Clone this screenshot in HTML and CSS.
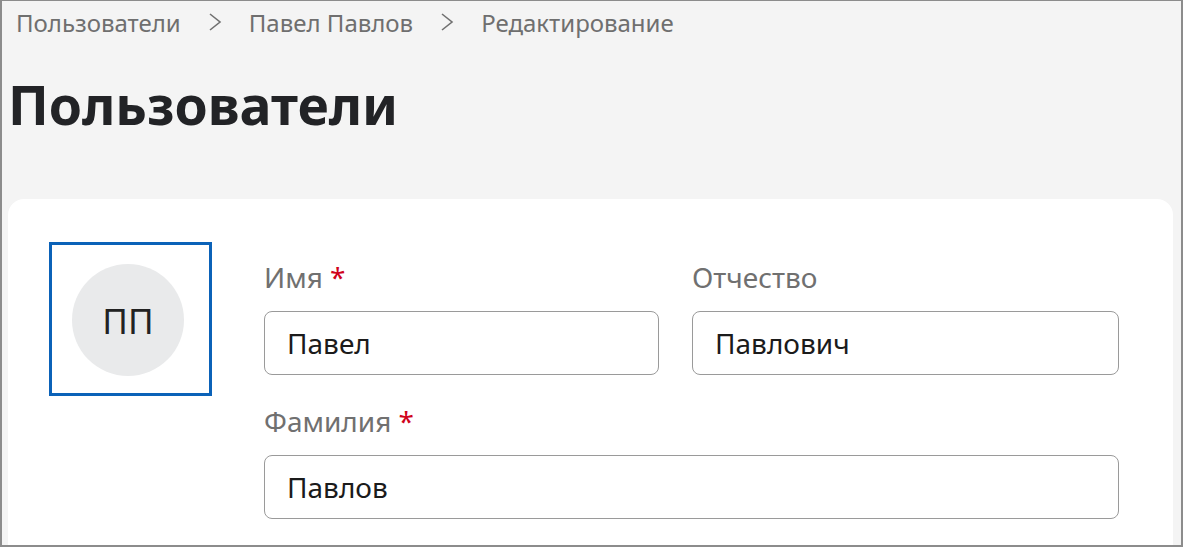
FILE: index.html
```html
<!DOCTYPE html>
<html lang="ru">
<head>
<meta charset="UTF-8">
<meta name="viewport" content="width=device-width, initial-scale=1.0">
<title>Пользователи — Редактирование</title>
<link rel="stylesheet" href="styles.css">
</head>
<body>
    <div class="frame">
        <nav class="crumbs">
            <a href="#">Пользователи</a>
            <svg class="chevron" width="14" height="18" viewBox="0 0 14 18"><polyline points="2,1 12,9 2,17" /></svg>
            <a href="#">Павел Павлов</a>
            <svg class="chevron" width="14" height="18" viewBox="0 0 14 18"><polyline points="2,1 12,9 2,17" /></svg>
            <span>Редактирование</span>
        </nav>

        <h1 class="page-title">Пользователи</h1>

        <section class="card">
            <div class="avatar-box">
                <div class="avatar">ПП</div>
            </div>

            <form class="fields">
                <div class="field">
                    <label for="firstName">Имя <span class="req">*</span></label>
                    <input type="text" id="firstName" value="Павел">
                </div>
                <div class="field">
                    <label for="middleName">Отчество</label>
                    <input type="text" id="middleName" value="Павлович">
                </div>
                <div class="field wide">
                    <label for="lastName">Фамилия <span class="req">*</span></label>
                    <input type="text" id="lastName" value="Павлов">
                </div>
            </form>
        </section>
    </div>
</body>
</html>
```

FILE: styles.css
```css
html, body {
    margin: 0;
    padding: 0;
}

body {
    font-family: 'Noto Sans', 'Open Sans', sans-serif;
    color: #222;
}

.frame {
    height: 100vh;
    box-sizing: border-box;
    border: 2px solid #8c8c8c;
    border-top-width: 1px;
    background-color: #f4f4f4;
    padding: 0 8px 0 6px;
    overflow: hidden;
}

.crumbs {
    display: flex;
    align-items: center;
    gap: 27px;
    height: 42px;
    padding-left: 8px;
    font-size: 24px;
    color: #6f6f6f;
}

.crumbs a {
    color: inherit;
    text-decoration: none;
}

.chevron {
    fill: none;
    stroke: #707070;
    stroke-width: 1.6;
}

.page-title {
    margin: 30px 0 0;
    font-size: 53.5px;
    line-height: 64px;
    font-weight: 700;
    color: #222326;
}

.card {
    display: flex;
    align-items: flex-start;
    margin-top: 62px;
    padding: 43px 54px 40px 41px;
    background-color: #fff;
    border-radius: 16px;
}

.avatar-box {
    width: 163px;
    height: 154px;
    box-sizing: border-box;
    border: 3px solid #0b62b8;
    padding: 19px 0 0 20px;
    margin-right: 52px;
    flex-shrink: 0;
}

.avatar {
    width: 112px;
    height: 112px;
    border-radius: 50%;
    background-color: #e9eaeb;
    display: flex;
    align-items: center;
    justify-content: center;
    font-size: 35px;
    color: #222;
}

.fields {
    flex: 1;
    min-width: 0;
    display: grid;
    grid-template-columns: 395px minmax(0, 1fr);
    column-gap: 33px;
    row-gap: 27px;
    margin-top: 16px;
}

.field {
    display: flex;
    flex-direction: column;
    min-width: 0;
}

.field.wide {
    grid-column: 1 / -1;
}

.field label {
    font-size: 28px;
    line-height: 38px;
    color: #707070;
    margin-bottom: 15px;
}

.req {
    color: #d0021b;
}

.field input {
    width: 100%;
    min-width: 0;
    height: 64px;
    box-sizing: border-box;
    padding: 0 22px;
    border: 1px solid #9a9a9a;
    border-radius: 8px;
    font-family: inherit;
    font-size: 28px;
    color: #1b1b1b;
    background-color: #fff;
}
```
